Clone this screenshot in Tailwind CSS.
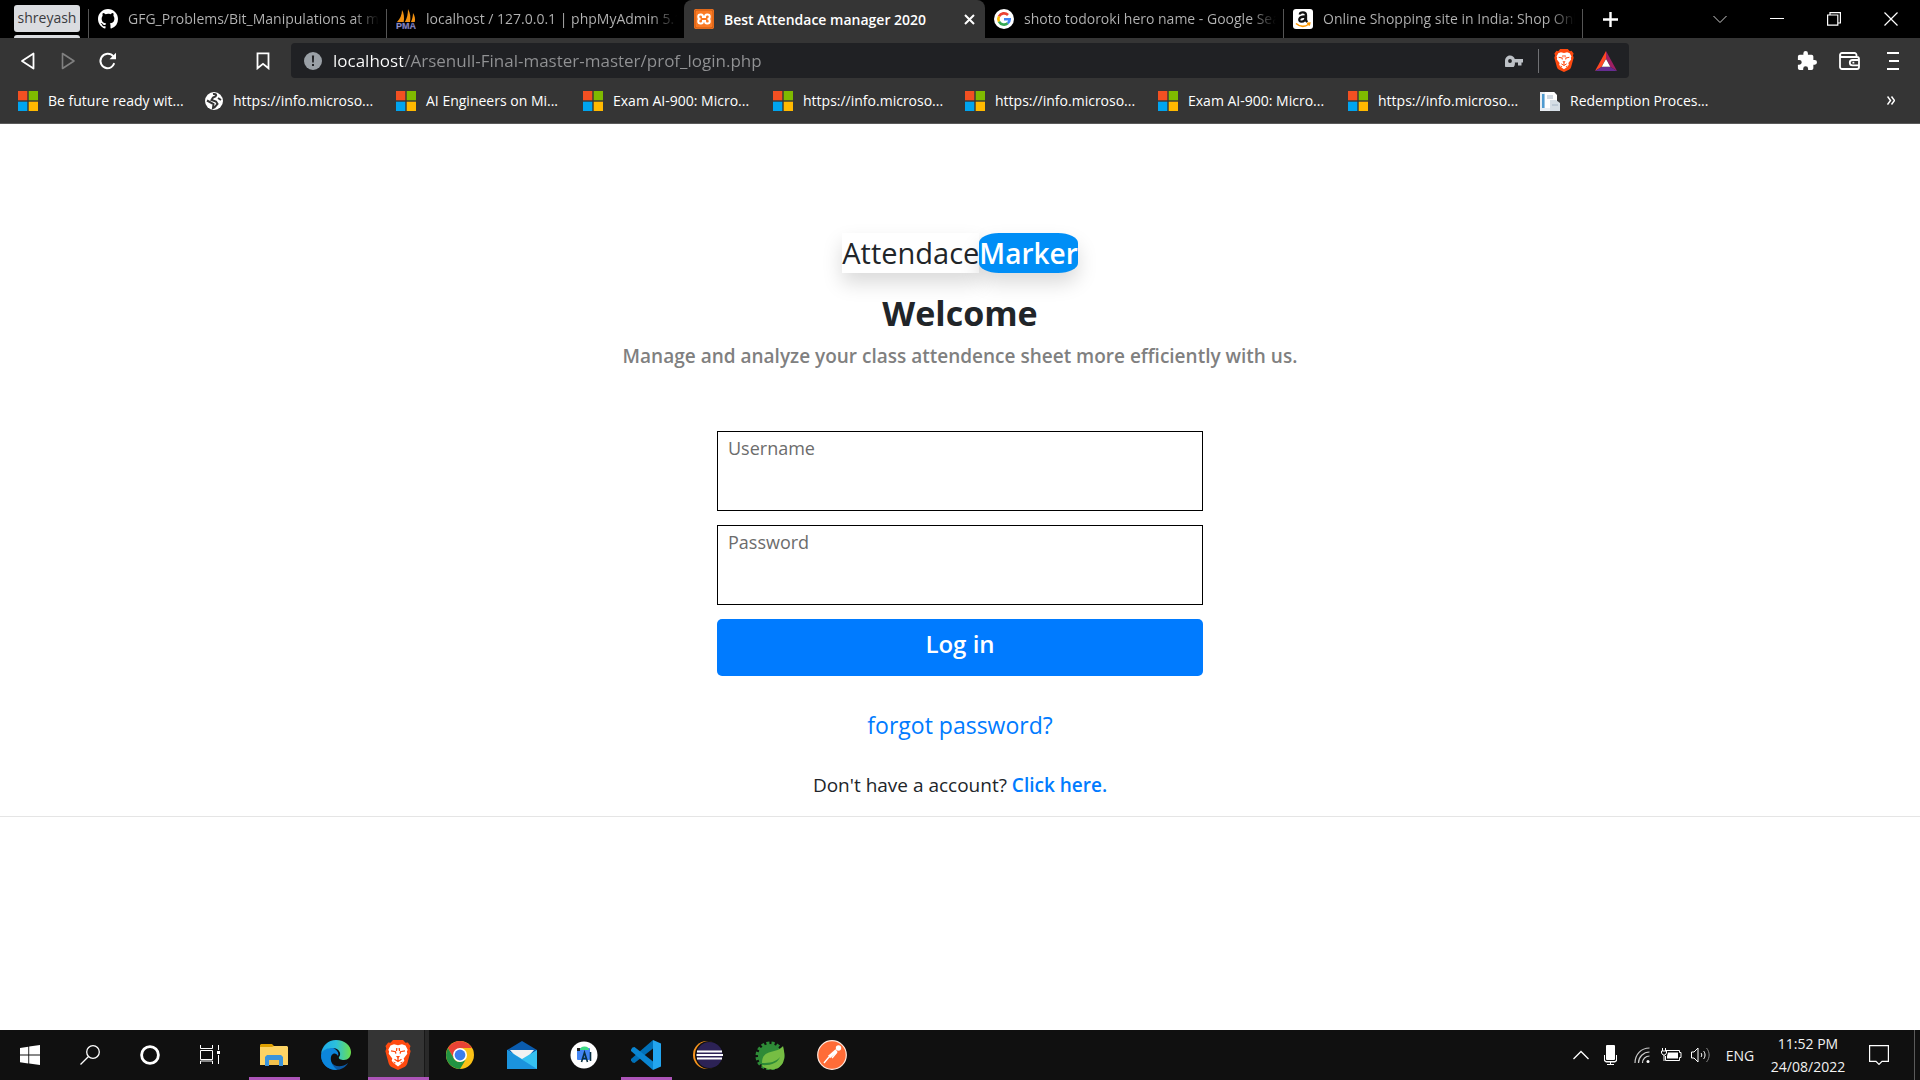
<!DOCTYPE html>
<html lang="en">
<head>
<meta charset="utf-8">
<meta name="viewport" content="width=device-width, initial-scale=1">
<title>Best Attendace manager 2020</title>
<script src="https://cdn.jsdelivr.net/npm/@tailwindcss/browser@4"></script>
</head>
<body class="flex min-h-screen flex-col overflow-x-hidden bg-white font-['Open_Sans','Noto_Sans',sans-serif] text-[14px] text-[#212529]">
<svg class="hidden" aria-hidden="true">
  <symbol id="ms" viewBox="0 0 20 20"><path fill="#f25022" d="M0 0h9.3v9.3H0z"/><path fill="#7fba00" d="M10.7 0H20v9.3h-9.3z"/><path fill="#00a4ef" d="M0 10.700h9.300V20H0z"/><path fill="#ffb900" d="M10.700 10.700H20V20h-9.300z"/></symbol>
  <symbol id="lion" viewBox="0 0 26 30"><path fill="#ff4a10" d="M8 0h10l2.500 2.800 2.300-.4L25.500 6l-.8 2.500.9 2.800-3.300 12.200c-.4 1.400-1.200 2.500-2.300 3.300L13 30l-7-3.200c-1.100-.8-1.900-1.900-2.300-3.300L.4 11.300l.9-2.800L.5 6l2.700-3.600 2.300.4z"/><path fill="#fff" d="M13 5.200l4-.9 3.500 1.200 2.200 4.300-.8 1.700.4 2.200-3.600 4.700.6 2.300L17.500 23 13 26.500 8.500 23l-1.800-2.300.6-2.300-3.600-4.700.4-2.200-.8-1.700L5.500 5.500 9 4.300z"/><path fill="none" stroke="#ff4a10" stroke-width="1.300" d="M6 10.800l4.500.9.300 2M20 10.800l-4.500.9-.3 2M11.800 8l-.3 3M14.200 8l.3 3M9.500 19.300l3.500 2.200 3.500-2.200M13 18v3.500"/><path fill="#ff4a10" d="M11 16h4l-2 2.800zM8 21.500l3 1.200-1.400 1zM18 21.500l-3 1.200 1.400 1z"/></symbol>
</svg>

<header class="shrink-0 bg-[#353535] text-white">
  <div class="flex h-[38px] items-center bg-black">
    <button class="ml-[14px] mr-[8px] flex h-[38px] w-[66px] shrink-0 flex-col justify-end text-black"><span class="h-[27px] w-full rounded-[3px] bg-[#dadce0] leading-[26px] text-[#3a3b3e]">shreyash</span><span class="mt-[3px] h-[3px] w-full rounded-t bg-[#dadce0]"></span></button>
    <nav class="flex h-full min-w-0 grow items-stretch text-[#b4b4b4]" aria-label="Tabs">
      <a href="#" class="flex w-[298px] min-w-0 items-center gap-[10px] pl-[9px] pr-[7px]"><span class="-ml-[9px] mt-[9px] h-[29px] w-px shrink-0 bg-[#555]"></span>
        <svg class="-ml-px h-5 w-5 shrink-0" viewBox="0 0 16 16" fill="#fff"><path d="M8 0C3.580 0 0 3.580 0 8c0 3.540 2.290 6.530 5.470 7.590.4.070.55-.17.55-.38v-1.490c-2.010.37-2.530-.49-2.690-.94-.09-.23-.48-.94-.82-1.130-.28-.15-.68-.52-.01-.53.63-.01 1.080.58 1.230.82.72 1.210 1.870.87 2.330.66.070-.52.280-.87.510-1.070-1.780-.2-3.640-.89-3.640-3.950 0-.87.310-1.590.82-2.150-.08-.2-.36-1.020.08-2.120 0 0 .67-.21 2.200.82A7.500 7.500 0 018 3.860c.68 0 1.360.09 2 .27 1.530-1.040 2.200-.82 2.200-.82.44 1.100.16 1.920.08 2.120.51.56.82 1.270.82 2.150 0 3.070-1.870 3.750-3.650 3.950.29.25.54.73.54 1.480v2.200c0 .21.150.46.550.38A8 8 0 0016 8c0-4.420-3.580-8-8-8z"/></svg>
        <span class="overflow-hidden whitespace-nowrap bg-gradient-to-r from-[#b4b4b4] from-90% to-transparent bg-clip-text leading-[22px] text-transparent">GFG_Problems/Bit_Manipulations at master</span></a>
      <a href="#" class="flex w-[298px] min-w-0 items-center gap-[10px] pl-[9px] pr-[7px]"><span class="-ml-[9px] mt-[9px] h-[29px] w-px shrink-0 bg-[#555]"></span>
        <svg class="-ml-px h-5 w-5 shrink-0" viewBox="0 0 20 20"><path fill="#f29111" d="M6 1c2 3 2.500 8 1.700 12H1c3-3 5-7 5-12zM12 0c2.500 4 2.800 9 2 13H9c2-4 3-8 3-13zM17 4c2 3 2.400 6 1.800 9H15c1.300-3 2-6 2-9z"/><text x="0" y="19.500" font-family="Liberation Sans" font-size="9" font-weight="bold" fill="#a3a3d5" stroke="#474792" stroke-width=".3">PMA</text></svg>
        <span class="overflow-hidden whitespace-nowrap bg-gradient-to-r from-[#b4b4b4] from-90% to-transparent bg-clip-text leading-[22px] text-transparent">localhost / 127.0.0.1 | phpMyAdmin 5.1.1</span></a>
      <a href="#" aria-current="page" class="flex w-[301px] min-w-0 items-center gap-[10px] rounded-t-lg bg-[#353535] px-[10px] font-semibold text-white">
        <svg class="h-5 w-5 shrink-0" viewBox="0 0 20 20"><rect width="20" height="20" rx="2" fill="#fb7a24"/><rect x="1" y="1" width="18" height="18" rx="2" fill="none" stroke="#c85a12"/><path d="M7 5.500h-.5a2.200 2.200 0 000 4.500 2.200 2.200 0 000 4.500H7c2 0 2-1.500 2-2.500h2c0 1 0 2.500 2 2.500h.5a2.200 2.200 0 000-4.500 2.200 2.200 0 000-4.500H13c-2 0-2 1.500-2 2.500H9c0-1 0-2.500-2-2.500z" fill="none" stroke="#fff" stroke-width="2"/></svg>
        <span class="grow whitespace-nowrap">Best Attendace manager 2020</span>
        <svg class="h-[11px] w-[11px] shrink-0" viewBox="0 0 11 11" stroke="#fff" stroke-width="2"><path d="M1 1l9 9M10 1l-9 9"/></svg></a>
      <a href="#" class="flex w-[298px] min-w-0 items-center gap-[10px] pl-[9px] pr-[7px]">
        <svg class="h-5 w-5 shrink-0" viewBox="0 0 20 20" fill="none" stroke-width="2.600"><circle cx="10" cy="10" r="10" fill="#fff"/><path stroke="#ea4335" d="M5 7.300A5.700 5.700 0 0114 6"/><path stroke="#fbbc05" d="M5 12.700a5.700 5.700 0 010-5.400"/><path stroke="#34a853" d="M5 12.700a5.700 5.700 0 008.700 1.600"/><path stroke="#4285f4" d="M10 10.200h5.700c0 1.700-.7 3.100-2 4.100"/></svg>
        <span class="overflow-hidden whitespace-nowrap bg-gradient-to-r from-[#b4b4b4] from-90% to-transparent bg-clip-text leading-[22px] text-transparent">shoto todoroki hero name - Google Search</span></a>
      <a href="#" class="flex w-[299px] min-w-0 items-center gap-[10px] pl-[9px] pr-[7px]"><span class="-ml-[9px] mt-[9px] h-[29px] w-px shrink-0 bg-[#555]"></span>
        <svg class="-ml-px h-5 w-5 shrink-0" viewBox="0 0 20 20"><rect width="20" height="20" rx="3" fill="#fff"/><path d="M6.800 5.500C7 2.700 13 2.500 13 6v5.500l1.300 1.500M12.500 7.500C5 7.200 5 12.700 8.500 12.700c2.500 0 4-2 4-4.200" fill="none" stroke="#111" stroke-width="2.300"/><path d="M3 14.500c4 3.500 9 3.500 13 .5M14 14.200l2.800-.2-.6 2.700" fill="none" stroke="#f90" stroke-width="1.500"/></svg>
        <span class="overflow-hidden whitespace-nowrap bg-gradient-to-r from-[#b4b4b4] from-90% to-transparent bg-clip-text leading-[22px] text-transparent">Online Shopping site in India: Shop Online</span></a>
      <span class="mt-[9px] w-px bg-[#555]"></span>
      <button aria-label="New tab" class="ml-[20px] self-center"><svg class="h-[15px] w-[15px]" viewBox="0 0 15 15" stroke="#fff" stroke-width="2.400"><path d="M7.500 0v15M0 7.500h15"/></svg></button>
    </nav>
    <div class="flex shrink-0 items-center gap-[43px] pr-[22px]">
      <button aria-label="Search tabs"><svg class="h-[14px] w-[14px]" viewBox="0 0 14 14" fill="none" stroke="#ccc"><path d="M.5 4L7 10.500 13.500 4"/></svg></button>
      <button aria-label="Minimize"><svg class="h-[14px] w-[14px]" viewBox="0 0 14 14" fill="#fff"><path d="M0 6h14v1H0z"/></svg></button>
      <button aria-label="Restore"><svg class="h-[14px] w-[14px]" viewBox="0 0 14 14" fill="none" stroke="#fff" stroke-width="1.200"><path d="M.6 3h10.200v10.200H.6zM3 3V.6h10.400V11H11"/></svg></button>
      <button aria-label="Close"><svg class="h-[14px] w-[14px]" viewBox="0 0 14 14" stroke="#fff" stroke-width="1.200"><path d="M.5.5l13 13M13.500.5l-13 13"/></svg></button>
    </div>
  </div>

  <div class="flex h-[45px] items-center pl-[20px] pr-[21px]">
    <button aria-label="Back"><svg class="h-[18px] w-[15px]" viewBox="0 0 15 18" fill="none" stroke="#fff" stroke-width="1.800" stroke-linejoin="round"><path d="M13.500 1.500v15L2 9z"/></svg></button>
    <button aria-label="Forward" class="ml-[26px]"><svg class="h-[18px] w-[15px]" viewBox="0 0 15 18" fill="none" stroke="#808080" stroke-width="1.600" stroke-linejoin="round"><path d="M1.500 1.500v15L13 9z"/></svg></button>
    <button aria-label="Reload" class="ml-[22px]"><svg class="h-[18px] w-[19px]" viewBox="0 0 19 18"><path d="M15.500 4.500A7.300 7.300 0 109 16.300c3.300 0 5.700-1.800 6.900-4.500" fill="none" stroke="#fff" stroke-width="2" stroke-linecap="round"/><path fill="#fff" d="M18 .8v6.400h-6.500z"/></svg></button>
    <button aria-label="Bookmark" class="ml-[139px]"><svg class="h-[18px] w-[14px]" viewBox="0 0 14 18" fill="none" stroke="#fff" stroke-width="1.800"><path d="M1.500 1.300h11v15L7 11.800l-5.500 4.500z"/></svg></button>
    <div class="ml-[21px] flex h-[35px] min-w-0 grow items-center rounded bg-[#202124] pl-[13px] pr-[14px]">
      <svg class="h-[18px] w-[18px] shrink-0" viewBox="0 0 18 18"><circle cx="9" cy="9" r="9" fill="#9aa0a6"/><path fill="#202124" d="M7.900 3.500h2.200l-.3 7H8.200zM8 12h2v2H8z"/></svg>
      <label for="address" class="sr-only">Address</label>
      <input id="address" class="ml-[11px] h-[24px] min-w-0 grow bg-[linear-gradient(90deg,#fff_70px,#919294_70px)] bg-clip-text text-[17px] leading-[24px] text-transparent caret-white outline-none" value="localhost/Arsenull-Final-master-master/prof_login.php">
      <svg class="h-[12px] w-[18px] shrink-0" viewBox="0 0 18 12" fill="#bdc1c6"><path fill-rule="evenodd" d="M5 .5A5.300 5.300 0 019.800 4H18v3.500h-1.500v3H13v-3H9.800A5.300 5.300 0 110 6C0 3 2 .5 5 .5zm0 3.600a1.900 1.900 0 100 3.800 1.900 1.900 0 000-3.800z"/></svg>
      <span class="mx-[15px] h-[24px] w-px shrink-0 bg-[#707174]"></span>
      <svg class="h-[23px] w-[20px] shrink-0"><use href="#lion"/></svg>
      <svg class="-mr-[2px] ml-[21px] h-[20px] w-[22px] shrink-0" viewBox="0 0 22 20"><path fill="#ff4724" d="M11 0L0 20l6.500-4L11 7.500z"/><path fill="#9e1f63" d="M11 0l11 20-6.500-4L11 7.500z"/><path fill="#662d91" d="M0 20h22l-6.500-4h-9z"/><path fill="#fff" d="M11 8l4.300 7.700H6.700z"/></svg>
    </div>
    <div class="ml-[168px] flex shrink-0 items-center gap-[22px]">
      <button aria-label="Extensions"><svg class="h-[20px] w-[20px]" viewBox="1 1 22 22" fill="#fff"><path d="M20.500 11H19V7a2 2 0 00-2-2h-4V3.500a2.500 2.500 0 00-5 0V5H4a2 2 0 00-2 2v3.800h1.500a2.700 2.700 0 010 5.400H2V20a2 2 0 002 2h3.800v-1.500a2.700 2.700 0 015.400 0V22H17a2 2 0 002-2v-4h1.500a2.500 2.500 0 000-5z"/></svg></button>
      <button aria-label="Wallet"><svg class="h-[18px] w-[21px]" viewBox="0 0 21 18" fill="none" stroke="#fff" stroke-width="1.800"><path d="M17.500 5V3a2 2 0 00-2-2H3a2 2 0 000 4h15a2 2 0 012 2v8a2 2 0 01-2 2H3a2 2 0 01-2-2V3M20 8h-6.500a2.700 2.700 0 000 5.400H20M13.500 10.700h1.800"/></svg></button>
      <button aria-label="Menu" class="ml-[5px]"><svg class="h-[18px] w-[12px]" viewBox="0 0 12 18" fill="#fff"><path d="M0 0h12v2H0zM2 8h10v2H2zM0 16h12v2H0z"/></svg></button>
    </div>
  </div>

  <div class="flex h-[41px] items-center justify-between border-b border-[#5a5a5a] pb-[5px] pl-[18px] pr-[25px]">
    <nav class="flex items-center whitespace-nowrap" aria-label="Bookmarks">
      <a href="#" class="flex w-[187px] items-center gap-[10px]"><svg class="h-5 w-5"><use href="#ms"/></svg>Be future ready wit...</a>
      <a href="#" class="flex w-[191px] items-center gap-[10px]"><svg class="h-[18px] w-[18px]" viewBox="0 0 18 18"><circle cx="9" cy="9" r="9" fill="#fff"/><path d="M8 2c3-.5 4 1 2.500 2.500L8 5.500 6.500 8 11 9.500l1.500 2.500-3 3.500L8 16l.5-4L2 8.500M13 6l3 2" fill="none" stroke="#353535" stroke-width="2"/></svg>https://info.microso...</a>
      <a href="#" class="flex w-[187px] items-center gap-[10px]"><svg class="h-5 w-5"><use href="#ms"/></svg>AI Engineers on Mi...</a>
      <a href="#" class="flex w-[190px] items-center gap-[10px]"><svg class="h-5 w-5"><use href="#ms"/></svg>Exam AI-900: Micro...</a>
      <a href="#" class="flex w-[192px] items-center gap-[10px]"><svg class="h-5 w-5"><use href="#ms"/></svg>https://info.microso...</a>
      <a href="#" class="flex w-[193px] items-center gap-[10px]"><svg class="h-5 w-5"><use href="#ms"/></svg>https://info.microso...</a>
      <a href="#" class="flex w-[190px] items-center gap-[10px]"><svg class="h-5 w-5"><use href="#ms"/></svg>Exam AI-900: Micro...</a>
      <a href="#" class="flex w-[192px] items-center gap-[10px]"><svg class="h-5 w-5"><use href="#ms"/></svg>https://info.microso...</a>
      <a href="#" class="flex items-center gap-[10px]"><svg class="h-5 w-5" viewBox="0 0 20 20"><path fill="#e8edf2" d="M0 1h14l3 4v15H0z"/><path fill="#4f9bd0" d="M2 3h2.500v14H2z"/><path fill="#fff" d="M5 1h9l3 3v13H5z"/><path fill="#d5dde5" d="M10 9h6l4 3v8H10z"/><path stroke="#a4b4c4" d="M7 5h6M7 7h6M12 14h6"/></svg>Redemption Proces...</a>
    </nav>
    <button aria-label="More bookmarks"><svg class="h-[9px] w-[8px]" viewBox="0 0 8 9" fill="none" stroke="#fff" stroke-width="1.500"><path d="M.5.5l3 4-3 4M4.500.5l3 4-3 4"/></svg></button>
  </div>
</header>

<main class="grow">
  <div class="flex flex-col items-center border-b border-[#e5e5e5] px-4 pb-[18px] pt-[109px] text-center">
    <div class="flex h-[40px] leading-[40px]"><span class="text-[29px] shadow-[0_10px_20px_rgba(0,0,0,0.15)]">Attendace</span><span class="rounded-[20px/10px] bg-[#008ef6] text-[28px] font-semibold text-white shadow-[0_10px_20px_rgba(0,0,0,0.15)]">Marker</span></div>
    <h1 class="mt-[18px] text-[34px] font-bold leading-[44px]">Welcome</h1>
    <p class="mt-[8px] text-[19px] font-semibold leading-[26px] text-[#808080]">Manage and analyze your class attendence sheet more efficiently with us.</p>
    <form class="mt-[62px] flex w-full max-w-[486px] flex-col gap-[14px]">
      <label for="user" class="sr-only">Username</label>
      <input id="user" type="text" placeholder="Username" class="h-[80px] w-full border border-black px-[10px] pb-[46px] text-[18px] leading-[30px] placeholder:text-[#6c6c6c]">
      <label for="pass" class="sr-only">Password</label>
      <input id="pass" type="password" placeholder="Password" class="h-[80px] w-full border border-black px-[10px] pb-[46px] text-[18px] leading-[30px] placeholder:text-[#6c6c6c]">
      <button type="button" class="h-[57px] rounded-[5px] bg-[#007bff] pb-[8px] text-[24px] font-semibold leading-[30px] text-white">Log in</button>
    </form>
    <a href="#" class="mt-[32px] text-[23px] leading-[34px] text-[#007bff]">forgot password?</a>
    <p class="mt-[30px] text-[19px] font-medium leading-[26px]">Don't have a account? <a href="#" class="font-semibold text-[#007bff]">Click here.</a></p>
  </div>
</main>

<footer class="flex h-[50px] shrink-0 items-stretch justify-between bg-[#101010] text-[#f2f2f2]">
  <nav class="flex" aria-label="Taskbar">
    <button aria-label="Start" class="flex w-[60px] items-center justify-center"><svg class="h-5 w-5" viewBox="0 0 20 20" fill="#fff"><path d="M0 2.900l8.300-1.200v7.900H0zM9.200 1.500L20 0v9.600H9.200zM0 10.500h8.300v7.900L0 17.200zM9.200 10.500H20V20L9.200 18.500z"/></svg></button>
    <button aria-label="Search" class="flex w-[60px] items-center justify-center"><svg class="h-5 w-5" viewBox="0 0 20 20" fill="none" stroke="#fff" stroke-width="1.300"><circle cx="13" cy="7" r="6.300"/><path d="M8.500 11.500L.5 19.500"/></svg></button>
    <button aria-label="Cortana" class="flex w-[60px] items-center justify-center"><svg class="h-5 w-5" viewBox="0 0 20 20" fill="none" stroke="#fff" stroke-width="2.800"><circle cx="10" cy="10" r="8.400"/></svg></button>
    <button aria-label="Task view" class="flex w-[60px] items-center justify-center"><svg class="h-5 w-5" viewBox="0 0 20 20" fill="none" stroke="#fff"><path d="M.5 0v3.500h12V0M.5 5.500h12v9H.5zM.5 19v-3h12v3M18.500 0v5M18.500 10v9"/><path fill="#fff" stroke="none" d="M17 6h3v3h-3z"/></svg></button>
    <div class="ml-[3px] grid grid-cols-[repeat(10,62px)]">
      <button aria-label="File Explorer" class="relative flex items-center justify-center"><svg class="h-6 w-7" viewBox="0 0 28 24"><path fill="#dfa000" d="M1 1h11l2 2v5H0V2z"/><path fill="#fdd364" d="M0 4h12l2-1h13l1 1v18H0z"/><path fill="#3a94dc" d="M5 14l2-2h14l2 2v9h-4v-6H9v6H5z"/><path fill="#f2c04c" d="M9 17h10v5H9z"/></svg><span class="absolute bottom-0 left-[6px] h-[3px] w-[51px] bg-[#ac54b8]"></span></button>
      <button aria-label="Edge" class="flex items-center justify-center"><svg class="h-[30px] w-[30px]" viewBox="0 0 30 30"><defs><linearGradient id="eg" x1="0" x2="1"><stop stop-color="#1ba9ea"/><stop offset=".5" stop-color="#2cc0dc"/><stop offset="1" stop-color="#6ce04a"/></linearGradient></defs><path fill="#0c59a4" d="M14 8c-5 2-7 8-4 14 3 5 11 6 17 1-2 4-7 7-12 7C7 30 1 24 0 17c4-8 9-9 14-9z"/><path fill="#0c86dc" d="M0 15C1 9 8 6 14 9c3 2 4 5 3 7-1-2-3-3-5-2-3 1-4 9 4 16C7 30 0 24 0 15z"/><path fill="url(#eg)" d="M0 14C1 6 7 0 15 0c9 0 15 6 15 12 0 5-3 8-7 8-3 0-6-1-5-3 3-3 0-9-6-9C6 8 2 10 0 14z"/></svg></button>
      <button aria-label="Brave" class="relative flex items-center justify-center"><span class="absolute inset-y-0 left-[1px] w-[56px] bg-[#343434]"></span><span class="absolute inset-y-0 left-[57px] w-[5px] border-l border-[#181818] bg-[#292929]"></span><svg class="relative -ml-px h-[30px] w-[26px]"><use href="#lion"/></svg><span class="absolute bottom-0 left-[1px] h-[3px] w-[61px] bg-[#ac54b8]"></span></button>
      <button aria-label="Chrome" class="flex items-center justify-center"><svg class="h-7 w-7" viewBox="0 0 28 28"><circle cx="14" cy="14" r="14" fill="#fbc116"/><path fill="#ea4335" d="M1.900 7A14 14 0 0126.100 7H14L8 17.500z"/><path fill="#229342" d="M1.900 7l6 10.500a7 7 0 006.100 3.500l5.500-2L14 28A14 14 0 011.900 7z"/><circle cx="14" cy="14" r="7" fill="#fff"/><circle cx="14" cy="14" r="5.400" fill="#3b7ded"/></svg></button>
      <button aria-label="Mail" class="flex items-center justify-center"><svg class="h-7 w-[30px]" viewBox="0 0 30 28"><path fill="#0a5cae" d="M0 9L15 0l15 9v8H0z"/><path fill="#f2f2f2" d="M3 9h24l-8 9h-8z"/><path fill="#35c1f1" d="M0 9l15 9 15-9v19H0z"/><path fill="#1b93dd" d="M0 9l30 19H0z"/></svg></button>
      <button aria-label="Android Studio" class="flex items-center justify-center"><svg class="h-7 w-7" viewBox="0 0 28 28"><circle cx="14" cy="14" r="13.500" fill="#fff"/><rect x="7" y="7" width="13" height="12" rx="1" fill="#4285f4"/><path fill="#3ddc84" d="M10 9a4.500 3.500 0 019 0z"/><path fill="#222" d="M7 7h3v3H7z"/><path fill="none" stroke="#083042" stroke-width="1.600" d="M11.500 21L14.500 11.500l3 9.500M12.500 17.500h4M20.500 11v9"/></svg></button>
      <button aria-label="Visual Studio Code" class="relative flex items-center justify-center"><svg class="h-[30px] w-[30px]" viewBox="0 0 30 30"><path fill="#0070b8" d="M22 0v8.500L3.500 23 1.500 22.500 0 20.500 0 19z"/><path fill="#0a85d1" d="M22 30v-8.500L3.500 7 1.500 7.500 0 9.500V11z"/><path fill="#23a5ef" d="M22 0l8 3.500v23L22 30z"/></svg><span class="absolute bottom-0 left-[6px] h-[3px] w-[51px] bg-[#ac54b8]"></span></button>
      <button aria-label="Eclipse" class="flex items-center justify-center"><svg class="h-7 w-[30px]" viewBox="0 0 30 28"><circle cx="14" cy="14" r="14" fill="#f7941e"/><circle cx="16" cy="14" r="14" fill="#101010"/><circle cx="16.500" cy="14" r="13" fill="#2c2255"/><path fill="#fff" d="M4 9.500h25v2H4zM3.500 13H30v2H3.500zM4 16.500h25v2H4z"/></svg></button>
      <button aria-label="Spring Tools" class="flex items-center justify-center"><svg class="h-[30px] w-[30px]" viewBox="0 0 30 30"><circle cx="15" cy="16" r="12" fill="#2e8b37"/><circle cx="15" cy="16" r="12.500" fill="none" stroke="#2e8b37" stroke-width="4" stroke-dasharray="3 2"/><path fill="#76bd43" d="M28 6c2 8 3 17-5 22-6 3-13 1-17-3 9 1 17-2 19-8-4 5-10 6-18 6 0-15 16-9 21-17z"/></svg></button>
      <button aria-label="Postman" class="flex items-center justify-center"><svg class="h-[30px] w-[30px]" viewBox="0 0 30 30"><circle cx="15" cy="15" r="14.300" fill="#ff6c37" stroke="#ffe9de" stroke-width="1.200"/><circle cx="21.500" cy="8" r="2.700" fill="#fff"/><path fill="none" stroke="#fff" stroke-width="3" d="M19.500 10.500L12 17"/><path fill="none" stroke="#fff" stroke-width="1.400" d="M12 17l-5 6M20 12l-5 6"/></svg></button>
    </div>
  </nav>
  <div class="flex items-center pr-[5px]">
    <button aria-label="Hidden icons"><svg class="h-[10px] w-4" viewBox="0 0 16 10" fill="none" stroke="#fff" stroke-width="1.300"><path d="M.5 9L8 1.500 15.500 9"/></svg></button>
    <svg class="ml-[15px] h-5 w-[13px]" viewBox="0 0 13 20" fill="#fff"><rect x="2" width="9" height="15" rx="1"/><path d="M0 10h1v5l1 1h9l1-1v-5h1v6l-2 1.500H7V19h3v1H3v-1h3v-1.500H2L0 16z"/></svg>
    <svg class="ml-[17px] h-4 w-4" viewBox="0 0 16 16" fill="none" stroke="#ccc" stroke-width="1.200"><path d="M1 16C1 7.500 7 1 15.500 1M4.500 16c0-6 5-11 11-11M8.500 16c0-4 3-7 7-7"/><circle cx="14" cy="14.500" r="1.500" fill="#fff" stroke="none"/></svg>
    <svg class="ml-[11px] h-[14px] w-[21px]" viewBox="0 0 21 14" fill="none" stroke="#fff"><path d="M5 2.500h13.500v2h1.500v5h-1.500v3H4.500V8M1.500 0v3M4.500 0v3M.5 3v2l1.500 2h2l1.500-2V3zM3 7v6"/><path fill="#fff" stroke="none" d="M7 4.500h10v6H6V8z"/></svg>
    <svg class="ml-[9px] h-[18px] w-[20px]" viewBox="0 0 20 18" fill="none" stroke="#fff"><path d="M.5 6v6H3l4 4V2L3 6zM10 7c1 1 1 3 0 4M12.500 5c2 2 2 6 0 8"/><path stroke="#888" d="M15.500 2c3.500 4 3.500 10 0 14"/></svg>
    <span class="ml-[14px] w-[30px] text-center">ENG</span>
    <div class="ml-[11px] w-[84px] text-center leading-[23px]"><time class="block">11:52 PM</time><time class="block">24/08/2022</time></div>
    <button aria-label="Notifications" class="ml-[19px]"><svg class="h-5 w-5" viewBox="0 0 20 20" fill="none" stroke="#fff" stroke-width="1.200"><path d="M.6.6h18.800v15.800H13l-3 3-3-3H.6z"/></svg></button>
    <span class="ml-[25px] h-full w-px bg-[#5a5a5a]"></span>
  </div>
</footer>
</body>
</html>
